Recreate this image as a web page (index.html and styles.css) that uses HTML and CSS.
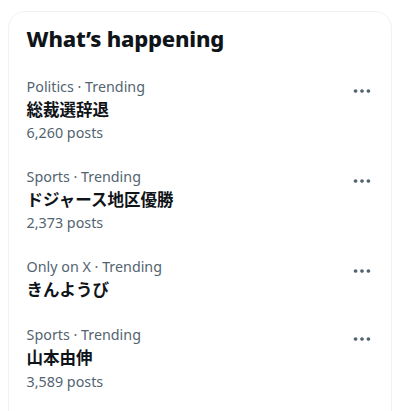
FILE: index.html
```html
<!DOCTYPE html>
<html lang="ja">
<head>
<meta charset="utf-8">
<link rel="stylesheet" href="styles.css">
</head>
<body>
<section class="card">
  <h2 class="heading">What’s happening</h2>
  <div class="trend">
    <div class="info">
      <div class="meta">Politics · Trending</div>
      <div class="title">総裁選辞退</div>
      <div class="posts">6,260 posts</div>
    </div>
    <svg class="more" viewBox="0 0 24 24"><path d="M3 12c0-1.1.9-2 2-2s2 .9 2 2-.9 2-2 2-2-.9-2-2zm9 2c1.1 0 2-.9 2-2s-.9-2-2-2-2 .9-2 2 .9 2 2 2zm7 0c1.1 0 2-.9 2-2s-.9-2-2-2-2 .9-2 2 .9 2 2 2z"/></svg>
  </div>
  <div class="trend">
    <div class="info">
      <div class="meta">Sports · Trending</div>
      <div class="title">ドジャース地区優勝</div>
      <div class="posts">2,373 posts</div>
    </div>
    <svg class="more" viewBox="0 0 24 24"><path d="M3 12c0-1.1.9-2 2-2s2 .9 2 2-.9 2-2 2-2-.9-2-2zm9 2c1.1 0 2-.9 2-2s-.9-2-2-2-2 .9-2 2 .9 2 2 2zm7 0c1.1 0 2-.9 2-2s-.9-2-2-2-2 .9-2 2 .9 2 2 2z"/></svg>
  </div>
  <div class="trend">
    <div class="info">
      <div class="meta">Only on X · Trending</div>
      <div class="title">きんようび</div>
    </div>
    <svg class="more" viewBox="0 0 24 24"><path d="M3 12c0-1.1.9-2 2-2s2 .9 2 2-.9 2-2 2-2-.9-2-2zm9 2c1.1 0 2-.9 2-2s-.9-2-2-2-2 .9-2 2 .9 2 2 2zm7 0c1.1 0 2-.9 2-2s-.9-2-2-2-2 .9-2 2 .9 2 2 2z"/></svg>
  </div>
  <div class="trend">
    <div class="info">
      <div class="meta">Sports · Trending</div>
      <div class="title">山本由伸</div>
      <div class="posts">3,589 posts</div>
    </div>
    <svg class="more" viewBox="0 0 24 24"><path d="M3 12c0-1.1.9-2 2-2s2 .9 2 2-.9 2-2 2-2-.9-2-2zm9 2c1.1 0 2-.9 2-2s-.9-2-2-2-2 .9-2 2 .9 2 2 2zm7 0c1.1 0 2-.9 2-2s-.9-2-2-2-2 .9-2 2 .9 2 2 2z"/></svg>
  </div>
</section>
</body>
</html>
```
FILE: styles.css
```css
html, body {
  margin: 0;
  padding: 0;
  background: #ffffff;
}
body {
  padding: 11px 16px 0 8px;
  font-family: "Noto Sans", "Noto Sans CJK JP", sans-serif;
  color: #0f1419;
  overflow: hidden;
  height: 411px;
  box-sizing: border-box;
}
.card {
  border: 1px solid #eff3f4;
  border-radius: 17px;
  height: 440px;
  box-sizing: border-box;
}
.heading {
  margin: 0;
  padding: 13.2px 17.6px;
  font-size: 22px;
  line-height: 26.4px;
  font-weight: 800;
  letter-spacing: -0.2px;
}
.trend {
  display: flex;
  align-items: flex-start;
  padding: 13.2px 17.6px;
}
.info {
  flex: 1;
}
.meta, .posts {
  font-size: 14.3px;
  line-height: 17.6px;
  color: #536471;
}
.title {
  padding-top: 2.2px;
  font-family: "Noto Sans CJK JP", sans-serif;
  font-size: 16.5px;
  line-height: 22px;
  font-weight: 700;
}
.posts {
  margin-top: 4.4px;
}
.more {
  width: 22px;
  height: 22px;
  fill: #536471;
  margin-top: 2px;
}
```
